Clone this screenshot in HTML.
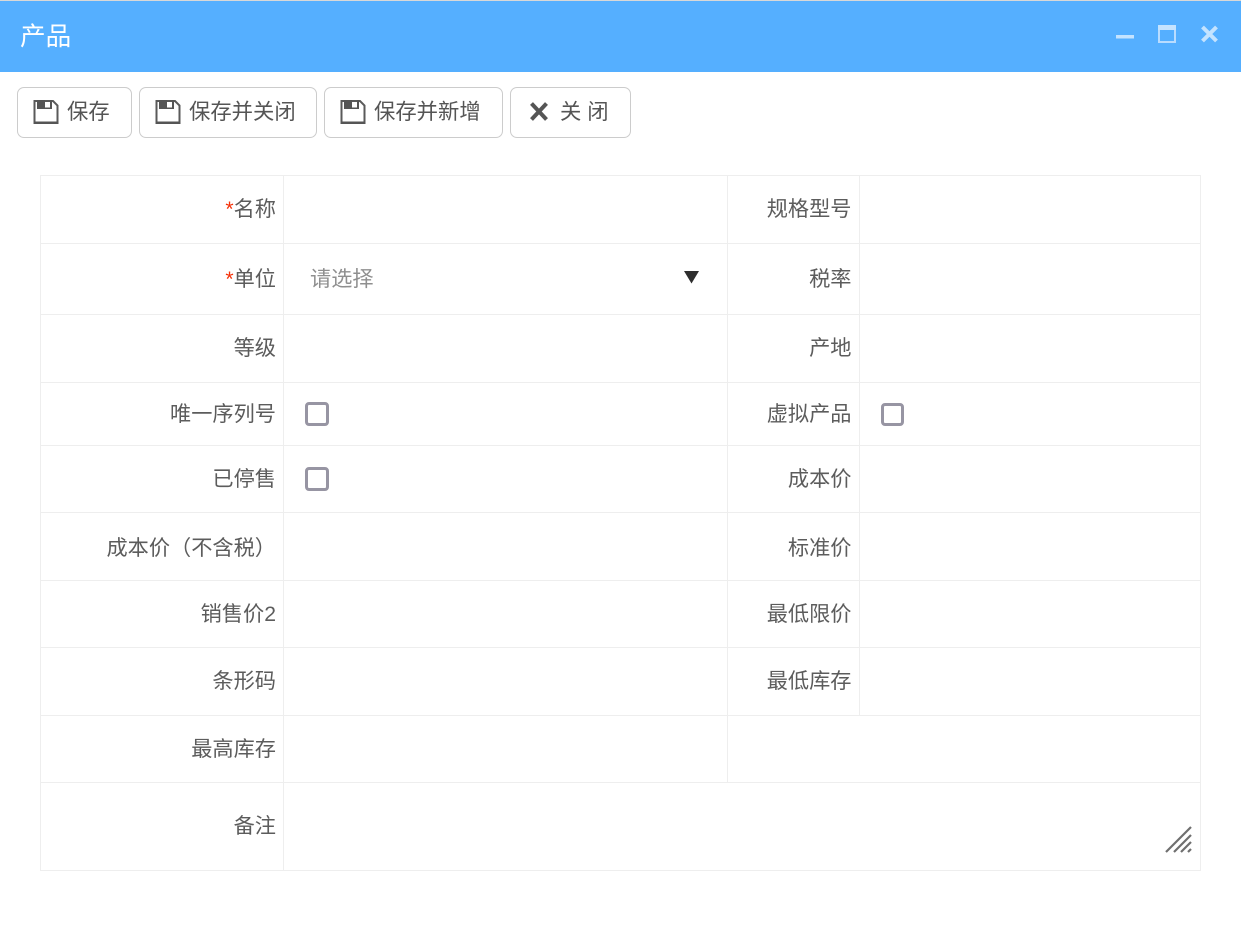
<!DOCTYPE html>
<html lang="zh-CN"><head><meta charset="utf-8"><style>
html,body{margin:0;padding:0;background:#fff;width:1241px;height:943px;overflow:hidden}
body{position:relative;font-family:"Liberation Sans","Noto Sans CJK SC",sans-serif;color:#5c5c5c;font-size:21.2px;font-weight:400}
.a{position:absolute}
.h{background:#eee;height:1px}
.v{background:#eee;width:1px}
.l{position:absolute;right:965px;line-height:30px;white-space:nowrap;margin-top:1px}
.r{position:absolute;right:389.5px;line-height:30px;white-space:nowrap;margin-top:1px}
.s{color:#f5320a}
.b{position:absolute;top:87px;height:49px;border:1px solid #ccc;border-radius:7px;background:#fff;box-sizing:content-box}
.t{position:absolute;top:97px;line-height:30px;white-space:nowrap;color:#555;font-size:21.33px}
.c{position:absolute;width:18px;height:18px;border:3px solid #9795a3;border-radius:4px;background:#fff}
</style></head><body>
<div class="a" style="left:0;top:0;width:1241px;height:1px;background:#d8d8d8"></div>
<div class="a" style="left:0;top:1px;width:1241px;height:71px;background:#55afff"></div>
<div class="a" style="left:20px;top:19px;color:#fff;font-size:25.6px;line-height:36px;font-weight:400">产品</div>
<svg class="a" style="left:1110px;top:20px" width="110" height="28" viewBox="0 0 110 28">
<rect x="6" y="15" width="18" height="3.5" fill="#c4e3ff"/>
<rect x="49" y="6" width="16" height="16" fill="none" stroke="#b9dcff" stroke-width="2"/><rect x="48" y="5" width="18" height="5" fill="#c4e3ff"/>
<path d="M92.5 7L106.5 21M106.5 7L92.5 21" stroke="#c4e3ff" stroke-width="4"/>
</svg>
<div class="b" style="left:17px;width:113px"></div>
<div class="b" style="left:139px;width:176px"></div>
<div class="b" style="left:324px;width:177px"></div>
<div class="b" style="left:510px;width:119px"></div>
<svg class="a" style="left:33px;top:99px" width="26" height="26" viewBox="0 0 26 26"><path d="M1.5 2H20L24.5 6.5V24H1.5Z" fill="#fff" stroke="#5a5a5a" stroke-width="2"/><rect x="1" y="22.5" width="24.5" height="2.5" fill="#555"/><rect x="4" y="1" width="8" height="9" fill="#555"/><rect x="17" y="1" width="2" height="9" fill="#555"/><rect x="4" y="8.5" width="15" height="1.5" fill="#555"/></svg>
<svg class="a" style="left:155px;top:99px" width="26" height="26" viewBox="0 0 26 26"><path d="M1.5 2H20L24.5 6.5V24H1.5Z" fill="#fff" stroke="#5a5a5a" stroke-width="2"/><rect x="1" y="22.5" width="24.5" height="2.5" fill="#555"/><rect x="4" y="1" width="8" height="9" fill="#555"/><rect x="17" y="1" width="2" height="9" fill="#555"/><rect x="4" y="8.5" width="15" height="1.5" fill="#555"/></svg>
<svg class="a" style="left:340px;top:99px" width="26" height="26" viewBox="0 0 26 26"><path d="M1.5 2H20L24.5 6.5V24H1.5Z" fill="#fff" stroke="#5a5a5a" stroke-width="2"/><rect x="1" y="22.5" width="24.5" height="2.5" fill="#555"/><rect x="4" y="1" width="8" height="9" fill="#555"/><rect x="17" y="1" width="2" height="9" fill="#555"/><rect x="4" y="8.5" width="15" height="1.5" fill="#555"/></svg>
<svg class="a" style="left:528px;top:101px" width="22" height="22" viewBox="0 0 22 22"><path d="M3.5 2.5L18.5 18.5M18.5 2.5L3.5 18.5" stroke="#555" stroke-width="4"/></svg>
<div class="t" style="left:67px">保存</div>
<div class="t" style="left:189px">保存并关闭</div>
<div class="t" style="left:374px">保存并新增</div>
<div class="t" style="left:560px">关 闭</div>

<div class="a h" style="left:40px;top:175px;width:1161px"></div>
<div class="a h" style="left:40px;top:243px;width:1161px"></div>
<div class="a h" style="left:40px;top:314px;width:1161px"></div>
<div class="a h" style="left:40px;top:382px;width:1161px"></div>
<div class="a h" style="left:40px;top:445px;width:1161px"></div>
<div class="a h" style="left:40px;top:512px;width:1161px"></div>
<div class="a h" style="left:40px;top:580px;width:1161px"></div>
<div class="a h" style="left:40px;top:647px;width:1161px"></div>
<div class="a h" style="left:40px;top:715px;width:1161px"></div>
<div class="a h" style="left:40px;top:782px;width:1161px"></div>
<div class="a h" style="left:40px;top:870px;width:1161px"></div>
<div class="a v" style="left:40px;top:175px;height:696px"></div>
<div class="a v" style="left:283px;top:175px;height:696px"></div>
<div class="a v" style="left:1200px;top:175px;height:696px"></div>
<div class="a v" style="left:727px;top:175px;height:607px"></div>
<div class="a v" style="left:859px;top:175px;height:540px"></div>

<div class="l" style="top:194px"><span class="s">*</span>名称</div>
<div class="l" style="top:264px"><span class="s">*</span>单位</div>
<div class="l" style="top:333px">等级</div>
<div class="l" style="top:399px">唯一序列号</div>
<div class="l" style="top:464px">已停售</div>
<div class="l" style="top:533px">成本价（不含税）</div>
<div class="l" style="top:599px">销售价2</div>
<div class="l" style="top:666px">条形码</div>
<div class="l" style="top:734px">最高库存</div>
<div class="l" style="top:811px">备注</div>

<div class="r" style="top:194px">规格型号</div>
<div class="r" style="top:264px">税率</div>
<div class="r" style="top:333px">产地</div>
<div class="r" style="top:399px">虚拟产品</div>
<div class="r" style="top:464px">成本价</div>
<div class="r" style="top:533px">标准价</div>
<div class="r" style="top:599px">最低限价</div>
<div class="r" style="top:666px">最低库存</div>

<div class="a" style="left:310px;top:265px;line-height:30px;color:#8f8f8f">请选择</div>
<svg class="a" style="left:684px;top:271px" width="15" height="13" viewBox="0 0 15 13"><path d="M0 0H15L7.5 12.5Z" fill="#2e2e2e"/></svg>
<div class="c" style="left:305px;top:402px"></div>
<div class="c" style="left:881px;top:403px;width:17px;height:17px"></div>
<div class="c" style="left:305px;top:467px"></div>
<svg class="a" style="left:1164px;top:825px" width="28" height="28" viewBox="0 0 28 28"><path d="M2 27L27 2M10 27L27 10M17 27L27 17M24 27L27 24" stroke="#6f6f6f" stroke-width="2.2" fill="none"/></svg>
</body></html>
